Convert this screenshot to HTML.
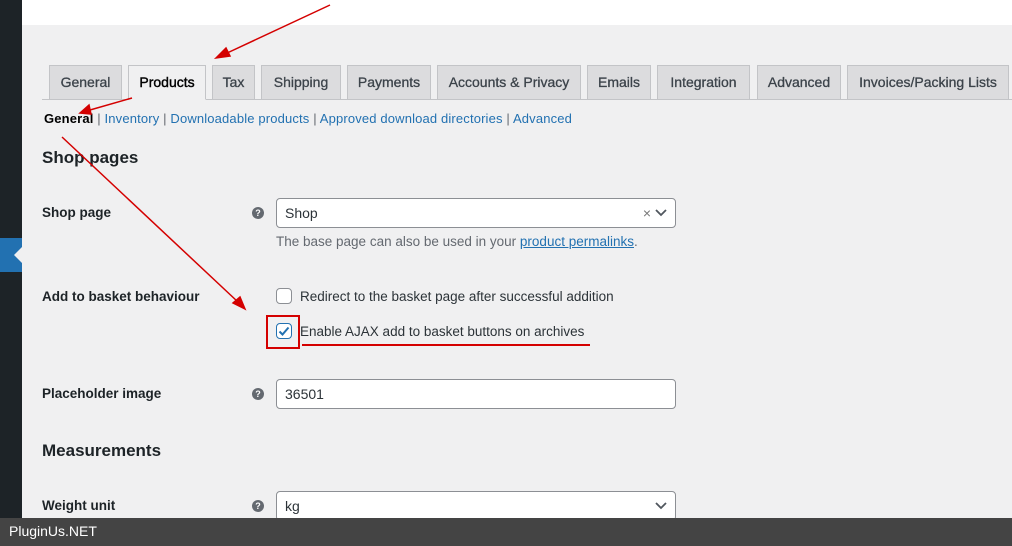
<!DOCTYPE html>
<html><head><style>
*{margin:0;padding:0;box-sizing:border-box}
body{width:1012px;height:546px;overflow:hidden;background:#f0f0f1;font-family:"Liberation Sans",Arial,sans-serif;font-size:14px;color:#1d2327;position:relative}
.a{position:absolute;white-space:nowrap}
.tab{position:absolute;top:65px;height:35px;background:#dcdcde;border:1px solid #c3c4c7;color:#3c434a;font-size:14px;text-align:center;line-height:33px;-webkit-text-stroke:0.3px #3c434a}
.lbl{font-weight:bold;font-size:13.5px}
.inp{position:absolute;left:276px;width:400px;height:30px;background:#fff;border:1px solid #8c8f94;border-radius:4px;padding-left:8px;line-height:28px;font-size:14px;color:#2c3338}
.q{position:absolute;left:252px;width:12px;height:12px;border-radius:50%;background:#646970;color:#fff;font-size:9px;font-weight:bold;text-align:center;line-height:12px}
a{color:#2271b1;text-decoration:none}
.cb{position:absolute;width:16px;height:16px;border:1px solid #8c8f94;border-radius:4px;background:#fff}
.chev{position:absolute;right:8px;top:9px}
</style></head><body>
<div class="a" style="left:0;top:0;width:1012px;height:25px;background:#fff"></div>
<div class="a" style="left:0;top:0;width:22px;height:546px;background:#1d2327"></div>
<div class="a" style="left:0;top:238px;width:22px;height:34px;background:#2271b1"></div>
<div class="a" style="left:14px;top:247px;width:0;height:0;border-top:8px solid transparent;border-bottom:8px solid transparent;border-right:8px solid #f0f0f1"></div>

<div class="a" style="left:42px;top:99px;width:970px;height:1px;background:#c3c4c7"></div>
<div class="tab" style="left:49px;width:73px">General</div>
<div class="tab" style="left:128px;width:78px;background:#f0f0f1;color:#000;border-bottom-color:#f0f0f1;-webkit-text-stroke:0.4px #000">Products</div>
<div class="tab" style="left:212px;width:43px">Tax</div>
<div class="tab" style="left:261px;width:80px">Shipping</div>
<div class="tab" style="left:347px;width:84px">Payments</div>
<div class="tab" style="left:437px;width:144px">Accounts &amp; Privacy</div>
<div class="tab" style="left:587px;width:64px">Emails</div>
<div class="tab" style="left:657px;width:93px">Integration</div>
<div class="tab" style="left:757px;width:84px">Advanced</div>
<div class="tab" style="left:847px;width:162px">Invoices/Packing Lists</div>

<div class="a" style="left:44px;top:110px;font-size:13px;line-height:17px;color:#646970;letter-spacing:0.15px"><b style="color:#000">General</b> | <a>Inventory</a> | <a>Downloadable products</a> | <a>Approved download directories</a> | <a>Advanced</a></div>

<div class="a" style="left:42px;top:148px;font-size:17px;font-weight:600">Shop pages</div>
<div class="a lbl" style="left:42px;top:205px">Shop page</div>
<div class="q" style="top:207px">?</div>
<div class="inp" style="top:198px">Shop<span style="position:absolute;right:24px;color:#777">×</span><svg class="chev" width="12" height="10" viewBox="0 0 12 10"><path d="M1 2l5 5 5-5" stroke="#50575e" stroke-width="1.8" fill="none"/></svg></div>
<div class="a" style="left:276px;top:234px;color:#646970;font-size:13.5px">The base page can also be used in your <a style="text-decoration:underline">product permalinks</a>.</div>

<div class="a lbl" style="left:42px;top:289px">Add to basket behaviour</div>
<div class="cb" style="left:276px;top:288px"></div>
<div class="a" style="left:300px;top:289px;font-size:13.5px;color:#2c3338">Redirect to the basket page after successful addition</div>
<div class="cb" style="left:276px;top:323px;border-color:#2271b1"><svg width="14" height="14" viewBox="0 0 14 14" style="position:absolute;left:0;top:0"><path d="M2.5 7.5l3 3 6-7" stroke="#2271b1" stroke-width="2" fill="none"/></svg></div>
<div class="a" style="left:266px;top:315px;width:34px;height:34px;border:2px solid #d40000"></div>
<div class="a" style="left:300px;top:324px;font-size:13.5px;color:#2c3338">Enable AJAX add to basket buttons on archives</div>
<div class="a" style="left:302px;top:344px;width:288px;height:2px;background:#d40000"></div>

<div class="a lbl" style="left:42px;top:386px">Placeholder image</div>
<div class="q" style="top:388px">?</div>
<div class="inp" style="top:379px">36501</div>

<div class="a" style="left:42px;top:441px;font-size:17px;font-weight:600">Measurements</div>
<div class="a lbl" style="left:42px;top:498px">Weight unit</div>
<div class="q" style="top:500px">?</div>
<div class="inp" style="top:491px">kg<svg class="chev" width="12" height="10" viewBox="0 0 12 10"><path d="M1 2l5 5 5-5" stroke="#50575e" stroke-width="1.8" fill="none"/></svg></div>

<svg class="a" style="left:0;top:0" width="1012" height="546">
<g stroke="#d40000" stroke-width="1.5" fill="#d40000">
<line x1="330" y1="5" x2="225" y2="54"/><polygon points="216,58 226,48 230,56"/>
<line x1="132" y1="98" x2="90" y2="110"/><polygon points="80,113 89,105 91,114"/>
<line x1="62" y1="137" x2="238" y2="302"/><polygon points="245,309 233,303 240,297"/>
</g></svg>

<div class="a" style="left:0;top:518px;width:1012px;height:28px;background:#444"></div>
<div class="a" style="left:9px;top:523px;color:#fff;font-size:14px">PluginUs.NET</div>
</body></html>
